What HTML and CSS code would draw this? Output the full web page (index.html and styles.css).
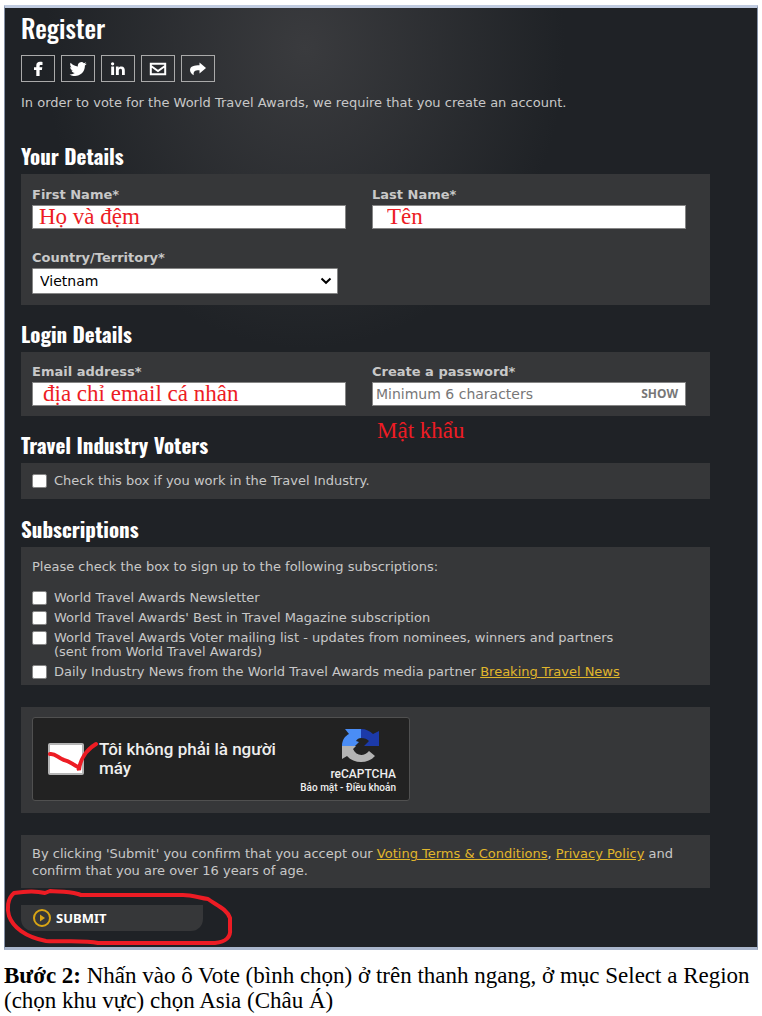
FILE: index.html
```
<!DOCTYPE html>
<html lang="vi">
<head>
    <meta charset="UTF-8">
    <meta name="viewport" content="width=device-width, initial-scale=1.0">
    <title>Register</title>
    <link rel="stylesheet" href="styles.css">
</head>
<body>
    <main class="page">
        <h1>Register</h1>
        <div class="social">
            <a href="#" aria-label="Facebook">
                <svg width="16" height="16" viewBox="0 0 16 16"><path d="M12.500 1v3h-1.700c-.9 0-1.200.4-1.200 1.100v1.100h2.700l-.4 2.800H9.600V15H6.300V9H4V6.200h2.300V4.400C6.300 2.100 7.700.8 9.900.8c.9 0 2 .1 2.600.2z"/></svg>
            </a>
            <a href="#" aria-label="Twitter">
                <svg width="18" height="18" viewBox="0 0 24 24"><path d="M23.600 4.900c-.8.400-1.700.6-2.700.8 1-.6 1.700-1.500 2-2.600-.9.500-1.900.9-3 1.100a4.700 4.700 0 0 0-8 4.300C8 8.300 4.500 6.400 2.200 3.600c-1.200 2.100-.6 4.900 1.500 6.300-.8 0-1.500-.2-2.100-.6 0 2.300 1.500 4.200 3.800 4.700-.7.200-1.400.2-2.100.1.600 1.900 2.300 3.200 4.400 3.300A9.500 9.500 0 0 1 .7 19.300c9.600 5.600 20.800-.8 20.500-12 1-.7 1.800-1.500 2.400-2.400z"/></svg>
            </a>
            <a href="#" aria-label="LinkedIn">
                <svg width="16" height="16" viewBox="0 0 16 16"><path d="M1.200 5.600h2.900V14H1.200zM2.600 1.200a1.600 1.600 0 1 1 0 3.300 1.600 1.600 0 0 1 0-3.300zM5.900 5.600h2.700v1.200c.5-.9 1.500-1.400 2.700-1.400 2.800 0 3.500 1.700 3.500 4.100V14H12v-4c0-1.100-.1-2.200-1.500-2.200S8.800 8.900 8.800 10v4H5.900z"/></svg>
            </a>
            <a href="#" aria-label="Email">
                <svg width="18" height="14" viewBox="0 0 18 14"><path class="line" d="M1.800 1.800h14.400v10.400H1.800zM2 4l7 5 7-5"/></svg>
            </a>
            <a href="#" aria-label="Share">
                <svg width="18" height="16" viewBox="0 0 18 16"><path d="M10.500 1.500 17 7l-6.500 5.500v-3.300C6.500 9 4 10 4.800 14.200 2.500 13.300 1 11.200 1 9c0-4 4.500-4.800 9.500-4.800z"/></svg>
            </a>
        </div>
        <p class="intro">In order to vote for the World Travel Awards, we require that you create an account.</p>

        <form>
            <h2>Your Details</h2>
            <div class="box fields">
                <div class="field">
                    <label for="first-name">First Name*</label>
                    <input type="text" id="first-name" value="Họ và đệm">
                </div>
                <div class="field">
                    <label for="last-name">Last Name*</label>
                    <input type="text" id="last-name" class="indent" value="Tên">
                </div>
                <div class="field">
                    <label for="country">Country/Territory*</label>
                    <div class="select">
                        <select id="country">
                            <option>Vietnam</option>
                        </select>
                        <svg width="12" height="8" viewBox="0 0 12 8"><path d="M1.500 1.500 6 5.800l4.500-4.300"/></svg>
                    </div>
                </div>
            </div>

            <h2>Login Details</h2>
            <div class="box fields login">
                <div class="field">
                    <label for="email">Email address*</label>
                    <input type="text" id="email" value="địa chỉ email cá nhân">
                </div>
                <div class="field">
                    <label for="password">Create a password*</label>
                    <div class="password">
                        <input type="password" id="password" placeholder="Minimum 6 characters">
                        <button type="button" class="show">SHOW</button>
                    </div>
                    <span class="note">Mật khẩu</span>
                </div>
            </div>

            <h2>Travel Industry Voters</h2>
            <div class="box industry">
                <label class="check"><input type="checkbox"><span>Check this box if you work in the Travel Industry.</span></label>
            </div>

            <h2>Subscriptions</h2>
            <div class="box subscriptions">
                <p>Please check the box to sign up to the following subscriptions:</p>
                <label class="check"><input type="checkbox"><span>World Travel Awards Newsletter</span></label>
                <label class="check"><input type="checkbox"><span>World Travel Awards' Best in Travel Magazine subscription</span></label>
                <label class="check"><input type="checkbox"><span>World Travel Awards Voter mailing list - updates from nominees, winners and partners<br>(sent from World Travel Awards)</span></label>
                <label class="check"><input type="checkbox"><span>Daily Industry News from the World Travel Awards media partner <a href="#">Breaking Travel News</a></span></label>
            </div>

            <div class="box captcha-box">
                <div class="captcha">
                    <div class="robot">
                        <input type="checkbox" id="robot">
                        <svg class="tick" width="52" height="34" viewBox="0 0 52 34"><path d="M2 13c5-1 8 4 14 6 6 1 9 5 14 7l1 3C32 19 38 9 48 3"/></svg>
                    </div>
                    <label for="robot">Tôi không phải là người máy</label>
                    <div class="brand">
                        <svg width="40" height="36" viewBox="0 0 40 36">
                            <path fill="#4a8df6" d="M20 1v9c-2 0-4 1-5 3l3 1-4 4H1C1 12 4 8 8 6L4 1z"/>
                            <path fill="#1c3aa9" d="M20 1c5 0 9 2 12 5l6-3v15H23l5-5c-2-2-4-3-8-3z"/>
                            <path fill="#b4b4b4" d="M1 18h14l-3 3c3 7 11 8 16 2l6 5C27 36 13 36 6 28l-5 3z"/>
                        </svg>
                        <span>reCAPTCHA</span>
                        <small><a href="#">Bảo mật</a> - <a href="#">Điều khoản</a></small>
                    </div>
                </div>
            </div>

            <div class="box terms">
                <p>By clicking 'Submit' you confirm that you accept our <a href="#">Voting Terms &amp; Conditions</a>, <a href="#">Privacy Policy</a> and confirm that you are over 16 years of age.</p>
            </div>

            <div class="actions">
                <button type="submit" class="submit">
                    <svg width="20" height="20" viewBox="0 0 20 20"><circle cx="10" cy="10" r="8"/><path d="M8 6.500v7l5-3.500z"/></svg>
                    SUBMIT
                </button>
                <svg class="circle" width="228" height="58" viewBox="0 0 228 58"><path d="M73 7C61 4 51 5 45 4L40 6C29 3 15 5 9 6C2 12 2 22 4 29C8 40 20 50 41 54C60 55 80 53 93 56H210C221 55 226 50 225 42V31C222 22 211 18 203 12C195 11 187 8 178 8H76z"/></svg>
            </div>
        </form>
    </main>
    <p class="step"><b>Bước 2:</b> Nhấn vào ô Vote (bình chọn) ở trên thanh ngang, ở mục Select a Region (chọn khu vực) chọn Asia (Châu Á)</p>
</body>
</html>
```
FILE: styles.css
```
* {
    box-sizing: border-box;
}

body {
    margin: 0;
    padding: 5px 4px 0;
    background: white;
    font-family: "DejaVu Sans", Verdana, sans-serif;
    font-size: 13px;
}

.page {
    padding: 4px 47px 16px 16px;
    border: 1px solid #8490a5;
    border-top: 3px solid #c0cbe0;
    border-bottom: 3px solid #a9b6cc;
    background: radial-gradient(ellipse 260px 300px at 300px 40px, #3a3b3e, #1f2226) #1f2226;
    color: #c8c8c8;
}

h1, h2 {
    font-family: Oswald, "Liberation Sans Narrow", "Liberation Sans", sans-serif;
    color: white;
    margin: 0;
}

h1 {
    font-size: 26px;
    font-weight: 500;
    line-height: 32px;
}

h2 {
    font-size: 21px;
    font-weight: 700;
    line-height: 28px;
    padding-bottom: 4px;
}

p {
    margin: 0;
}

a {
    color: #e0b62c;
}

.social {
    display: flex;
    gap: 6px;
    margin-top: 11px;
}

.social a {
    display: flex;
    align-items: center;
    justify-content: center;
    width: 34px;
    height: 27px;
    border: 1px solid #aaa;
}

.social svg {
    fill: white;
}

.social .line {
    fill: none;
    stroke: white;
    stroke-width: 2;
}

.intro {
    line-height: 16px;
    margin: 13px 0 31px;
}

.box {
    background: #363739;
    padding: 11px;
}

.fields {
    display: grid;
    grid-template-columns: 1fr 1fr;
    column-gap: 26px;
    row-gap: 22px;
    padding-right: 24px;
    padding-top: 14px;
    margin-bottom: 15px;
}

.fields.login {
    padding-top: 13px;
    padding-bottom: 10px;
}

.field {
    position: relative;
}

.field label {
    display: block;
    font-weight: bold;
    line-height: 14px;
    margin-bottom: 3px;
}

.field input {
    display: block;
    width: 100%;
    height: 24px;
    padding: 0 6px;
    border: 1px solid #858585;
    background: white;
    font-family: "Liberation Serif", serif;
    font-size: 23px;
    color: #ed1c24;
}

.field #email {
    padding-left: 10px;
}

.field .indent {
    padding-left: 14px;
}

.select {
    position: relative;
    margin-right: 8px;
}

.select select {
    display: block;
    appearance: none;
    width: 100%;
    height: 26px;
    padding: 0 7px;
    border: 1px solid #858585;
    border-radius: 1px;
    background: white;
    font-family: inherit;
    font-size: 14px;
    color: black;
}

.select svg {
    position: absolute;
    right: 6px;
    top: 9px;
    fill: none;
    stroke: black;
    stroke-width: 2;
}

.password {
    position: relative;
}

.field .password input {
    padding: 0 60px 0 3px;
    font-family: "DejaVu Sans", Verdana, sans-serif;
    font-size: 14px;
}

.password input::placeholder {
    color: #777;
}

.show {
    position: absolute;
    right: 8px;
    top: 5px;
    padding: 0;
    border: none;
    background: none;
    font: bold 12px/14px "Noto Sans", sans-serif;
    color: #777;
}

.note {
    position: absolute;
    left: 5px;
    top: 54px;
    font-family: "Liberation Serif", serif;
    font-size: 23px;
    line-height: 24px;
    color: #ed1c24;
}

.check {
    display: flex;
    gap: 7px;
    line-height: 14px;
}

.check input {
    appearance: none;
    flex: none;
    width: 15px;
    height: 14px;
    margin: 0;
    border: 1px solid #858585;
    border-radius: 2px;
    background: white;
}

.industry {
    margin-bottom: 16px;
}

.subscriptions p {
    line-height: 18px;
    margin-bottom: 15px;
}

.subscriptions {
    padding-bottom: 6px;
}

.check + .check {
    margin-top: 6px;
}

.captcha-box,
.terms {
    margin-top: 22px;
}

.captcha-box {
    padding: 10px 11px 12px;
}

.captcha {
    display: flex;
    align-items: center;
    width: 378px;
    height: 84px;
    padding: 0 13px 0 15px;
    border: 1px solid #505050;
    border-radius: 3px;
    background: #222;
    font-family: Roboto, sans-serif;
    font-weight: 500;
    color: #eee;
}

.robot {
    position: relative;
}

.robot input {
    appearance: none;
    display: block;
    width: 36px;
    height: 32px;
    margin: 0;
    border: 2px solid #b5b5b5;
    border-radius: 2px;
    background: white;
}

.tick {
    position: absolute;
    left: 0;
    top: -2px;
    fill: none;
    stroke: #ed1c24;
    stroke-width: 4;
    stroke-linecap: round;
}

.captcha label {
    flex: 1;
    margin-left: 15px;
    font-size: 17px;
    line-height: 19px;
}

.brand {
    display: flex;
    flex-direction: column;
    align-items: flex-end;
    padding-top: 4px;
}

.brand span {
    font-size: 12px;
    line-height: 16px;
}

.brand small {
    font-size: 10px;
    line-height: 12px;
    white-space: nowrap;
}

.brand a {
    color: inherit;
    text-decoration: none;
}

.brand svg {
    margin: 0 15px 2px 0;
}

.terms p {
    line-height: 17px;
}

.terms {
    padding: 10px 11px 9px;
}

.actions {
    position: relative;
    margin-top: 17px;
}

.submit {
    display: flex;
    align-items: center;
    gap: 4px;
    width: 182px;
    height: 26px;
    padding: 0 11px;
    border: none;
    border-radius: 0 0 12px 12px;
    background: #363739;
    font-family: "Noto Sans", sans-serif;
    font-size: 13px;
    font-weight: bold;
    color: white;
}

.submit svg {
    fill: #d9a514;
}

.submit circle {
    fill: none;
    stroke: #d9a514;
    stroke-width: 2;
}

.circle {
    position: absolute;
    left: -16px;
    top: -18px;
    fill: none;
    stroke: #ed1c24;
    stroke-width: 4;
    stroke-linejoin: round;
    pointer-events: none;
}

.step {
    margin: 13px 0 0;
    font-family: "Liberation Serif", serif;
    font-size: 23px;
    line-height: 25px;
    color: black;
}
```
